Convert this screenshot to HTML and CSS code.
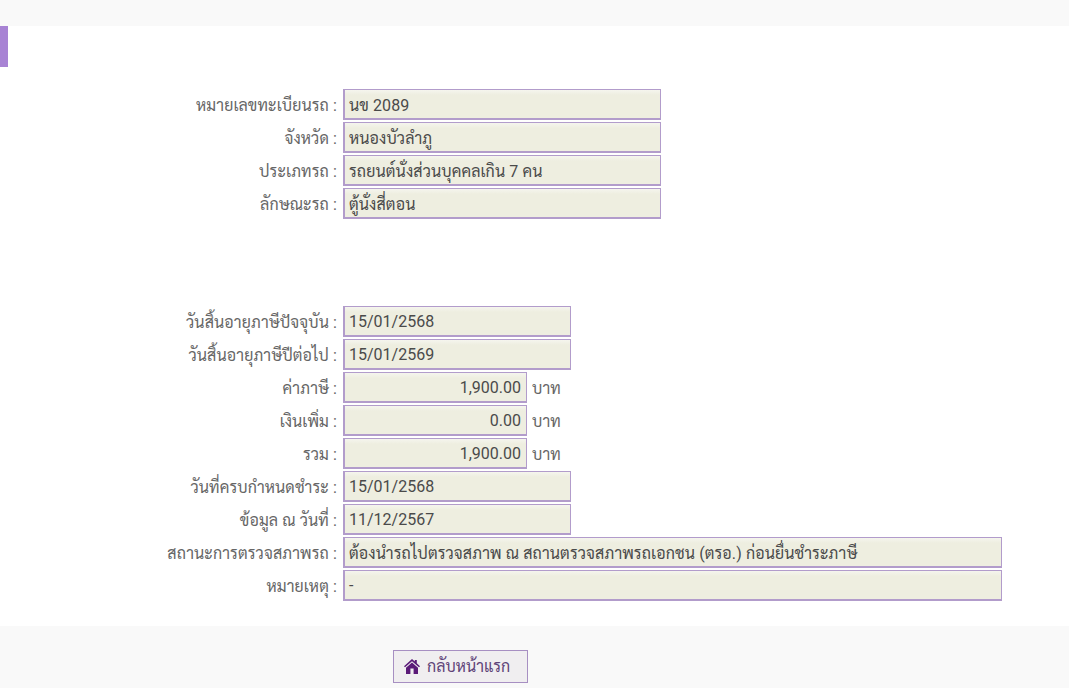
FILE: index.html
```html
<!DOCTYPE html>
<html lang="th">
<head>
<meta charset="utf-8">
<title>ข้อมูลภาษีรถ</title>
<link rel="stylesheet" href="styles.css">
</head>
<body>
<header class="top-band"></header>
<main class="content">
  <div class="marker"></div>
  <section class="group group-vehicle">
    <div class="row"><label class="label">หมายเลขทะเบียนรถ :</label><div class="field th w-m">นข 2089</div></div>
    <div class="row"><label class="label">จังหวัด :</label><div class="field th w-m">หนองบัวลำภู</div></div>
    <div class="row"><label class="label">ประเภทรถ :</label><div class="field th w-m">รถยนต์นั่งส่วนบุคคลเกิน 7 คน</div></div>
    <div class="row"><label class="label">ลักษณะรถ :</label><div class="field th w-m">ตู้นั่งสี่ตอน</div></div>
  </section>
  <section class="group group-tax">
    <div class="row"><label class="label">วันสิ้นอายุภาษีปัจจุบัน :</label><div class="field w-s">15/01/2568</div></div>
    <div class="row"><label class="label">วันสิ้นอายุภาษีปีต่อไป :</label><div class="field w-s">15/01/2569</div></div>
    <div class="row"><label class="label">ค่าภาษี :</label><div class="field w-xs num">1,900.00</div><span class="unit">บาท</span></div>
    <div class="row"><label class="label">เงินเพิ่ม :</label><div class="field w-xs num">0.00</div><span class="unit">บาท</span></div>
    <div class="row"><label class="label">รวม :</label><div class="field w-xs num">1,900.00</div><span class="unit">บาท</span></div>
    <div class="row"><label class="label">วันที่ครบกำหนดชำระ :</label><div class="field w-s">15/01/2568</div></div>
    <div class="row"><label class="label">ข้อมูล ณ วันที่ :</label><div class="field w-s">11/12/2567</div></div>
    <div class="row"><label class="label">สถานะการตรวจสภาพรถ :</label><div class="field th w-l">ต้องนำรถไปตรวจสภาพ ณ สถานตรวจสภาพรถเอกชน (ตรอ.) ก่อนยื่นชำระภาษี</div></div>
    <div class="row"><label class="label">หมายเหตุ :</label><div class="field w-l">-</div></div>
  </section>
</main>
<footer class="actions">
  <a class="btn" href="#">
    <svg class="btn-icon" viewBox="0 0 16 15" aria-hidden="true">
      <path d="M8 0 L10.8 2.5 L10.8 1 L12.8 1 L12.8 4.3 L16 7.2 L15 8.2 L8 2.2 L1 8.2 L0 7.2 Z"/>
      <path fill-rule="evenodd" d="M8 3.6 L14 8.8 L14 15 L2 15 L2 8.8 Z M6.4 9.5 L6.4 15 L9.6 15 L9.6 9.5 Z"/>
    </svg>
    <span class="btn-label">กลับหน้าแรก</span>
  </a>
</footer>
</body>
</html>
```
FILE: styles.css
```css
* { box-sizing: border-box; }
html, body { margin: 0; padding: 0; height: 100%; overflow: hidden; }
body {
  width: 1069px;
  background: #fff;
  color: #666;
  font-family: Roboto, Sarabun, sans-serif;
  font-size: 16px;
  line-height: normal;
}
.top-band { height: 26px; background: #f9f9f9; }
.content { height: 600px; }
.marker { width: 8px; height: 41px; background: #a883d4; }
.group { display: flex; flex-direction: column; gap: 2px; }
.group-vehicle { padding-top: 22px; }
.group-tax { padding-top: 87px; }
.row { display: flex; align-items: center; height: 31px; }
.label { width: 337px; text-align: right; white-space: nowrap; letter-spacing: 0.1px; }
.field {
  margin-left: 6px;
  height: 31px;
  padding: 5px 5px 0 4px;
  border: 1px solid #b29ccb;
  border-width: 1px 1px 2px 2px;
  background: linear-gradient(#f5f5ee 0, #eeeee0 5px);
  color: #4a4a4a;
  white-space: nowrap;
}
.th { padding-top: 4px; letter-spacing: 0.1px; }
.w-xs { width: 184px; }
.w-s { width: 228px; }
.w-m { width: 318px; }
.w-l { width: 659px; }
.num { text-align: right; }
.unit { margin-left: 5px; letter-spacing: 0.1px; }
.actions { height: 62px; padding: 24px 0 0 393px; background: #f9f9f9; }
.btn {
  display: inline-flex;
  align-items: center;
  gap: 7px;
  width: 135px;
  height: 33px;
  padding-left: 10px;
  border: 1px solid #a78fc2;
  background: #f0eef0;
  color: #5f4478;
  text-decoration: none;
}
.btn-label { margin-bottom: 2px; }
.btn-icon { width: 16px; height: 15px; fill: #5b1a78; }
```
